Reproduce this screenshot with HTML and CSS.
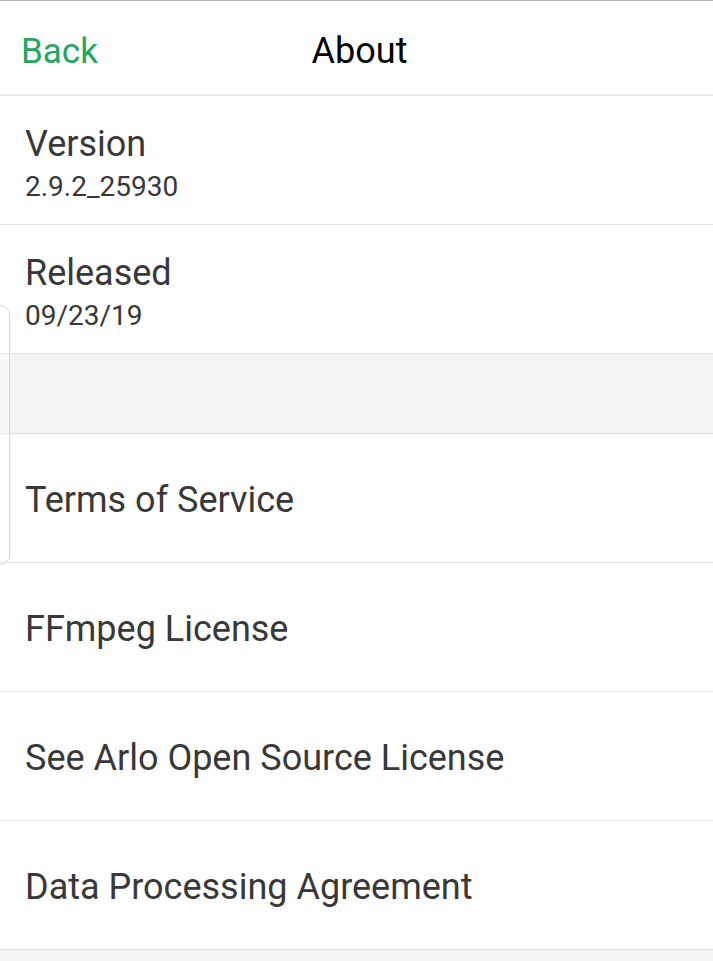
FILE: index.html
```html
<!DOCTYPE html>
<html lang="en">
<head>
    <meta charset="UTF-8">
    <meta name="viewport" content="width=device-width, initial-scale=1.0">
    <title>About</title>
    <link rel="stylesheet" href="styles.css">
</head>
<body>
    <!-- Header -->
    <header class="top-bar">
        <a href="#" class="back-link">Back</a>
        <h1 class="page-title">About</h1>
    </header>

    <!-- Info rows -->
    <main>
        <div class="row">
            <div class="row-title">Version</div>
            <div class="row-sub">2.9.2_25930</div>
        </div>
        <div class="row">
            <div class="row-title">Released</div>
            <div class="row-sub">09/23/19</div>
        </div>
        <div class="spacer"></div>
        <a href="#" class="row link-row">Terms of Service</a>
        <a href="#" class="row link-row">FFmpeg License</a>
        <a href="#" class="row link-row">See Arlo Open Source License</a>
        <a href="#" class="row link-row">Data Processing Agreement</a>
    </main>

    <!-- edge swipe handle -->
    <div class="edge-handle"></div>
</body>
</html>
```

FILE: styles.css
```css
body {
    margin: 0;
    padding: 0;
    font-family: Roboto, "Noto Sans", sans-serif;
    background-color: #f4f4f4;
    color: #333;
    min-height: 100vh;
}
.top-bar {
    position: relative;
    height: 96px;
    box-sizing: border-box;
    background: #fff;
    border-top: 1px solid #b4b4b4;
    border-bottom: 2px solid #e8e8e8;
    display: flex;
    align-items: center;
    justify-content: center;
    padding-top: 6px;
}
.back-link {
    position: absolute;
    left: 21px;
    top: 50%;
    transform: translateY(-50%);
    margin-top: 3px;
    color: #23a65e;
    font-size: 35px;
    text-decoration: none;
}
.page-title {
    margin: 0 0 0 6px;
    font-size: 36px;
    font-weight: normal;
    color: #000;
}
main {
    background: #fff;
}
.row {
    height: 124px;
    padding-top: 4px;
    border-bottom: 1px solid #e2e2e2;
    padding-left: 25px;
    display: flex;
    flex-direction: column;
    justify-content: center;
    background: #fff;
    color: #383838;
    text-decoration: none;
}
.row-title {
    font-size: 36px;
    line-height: 50px;
}
.row-sub {
    font-size: 28px;
    line-height: 36px;
}
.link-row {
    font-size: 36px;
}
.spacer {
    height: 79px;
    background: #f4f4f4;
    border-bottom: 1px solid #e2e2e2;
}
.edge-handle {
    position: absolute;
    left: -12px;
    top: 305px;
    width: 20px;
    height: 258px;
    border: 1px solid #d6d6d6;
    border-radius: 10px;
    background: rgba(255, 255, 255, 0.3);
}
```
